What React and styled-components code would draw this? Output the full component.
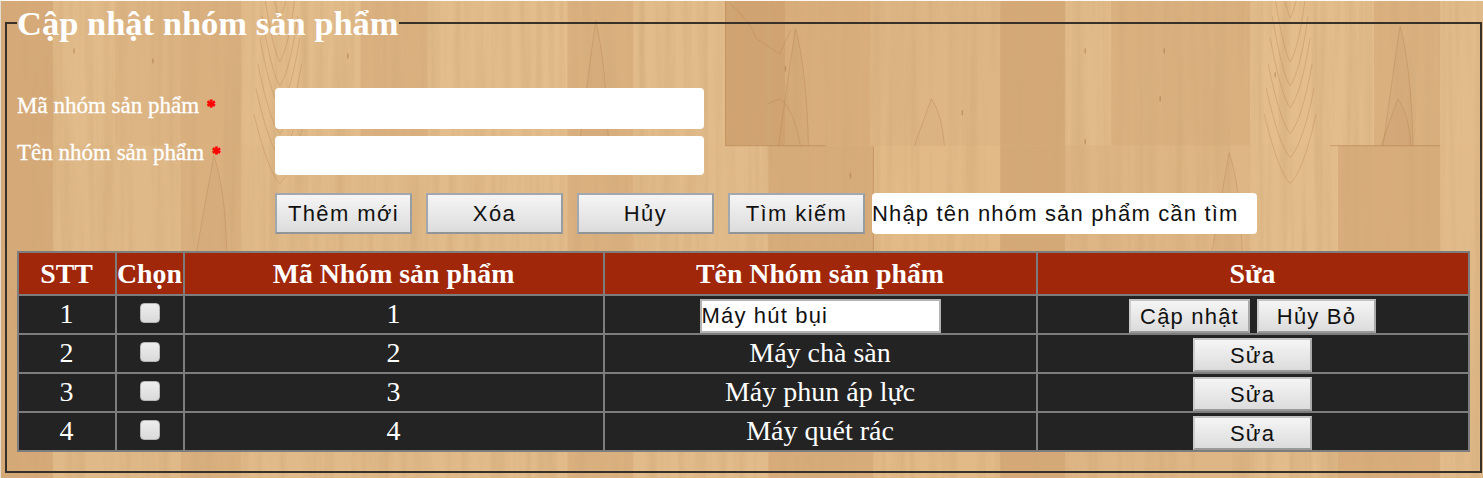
import React from 'react';
import styled, { createGlobalStyle } from 'styled-components';

const GlobalStyle = createGlobalStyle`
  * { box-sizing: border-box; }
  body { margin: 0; background: #ddb583; overflow: hidden; }
  button, input { margin: 0; padding: 0; font: inherit; }
`;

const serif = '"Liberation Serif", "Times New Roman", serif';
const sans = '"Liberation Sans", Arial, sans-serif';

const Page = styled.main`
  position: relative;
  isolation: isolate;
  width: 1483px;
  height: 478px;
  padding: 2px 1px 5px 4px;
  border-top: 1px solid #fdf9f2;
  border-left: 1px solid #e3ddd3;
  font-family: ${serif};
  color: #fff;
  overflow: hidden;
`;

const Backdrop = styled.svg`
  position: absolute;
  inset: 0;
  z-index: -1;
  width: 100%;
  height: 100%;
`;

const Group = styled.fieldset`
  display: block;
  min-width: 0;
  height: 470px;
  margin: 0;
  padding: 0 10px;
  border: 2px solid #37312a;
`;

const Title = styled.legend`
  height: 40px;
  margin: 0;
  padding: 0;
  font-size: 34.5px;
  font-weight: bold;
  line-height: 40px;
  white-space: nowrap;
`;

const Form = styled.form`
  display: flex;
  flex-direction: column;
  padding-top: 45px;
`;

const Field = styled.label`
  display: flex;
  align-items: center;
  height: ${(p) => p.$height}px;
  margin-bottom: ${(p) => p.$gap}px;
`;

const Caption = styled.span`
  width: 258px;
  padding-bottom: 4px;
  font-size: 23px;
  line-height: 26px;
  white-space: nowrap;
  -webkit-text-stroke: 0.3px #fff;
`;

const Required = styled.span`
  margin-left: 2px;
  color: #f00;
  font-size: 18px;
  font-weight: bold;
  -webkit-text-stroke: 0.8px #f00;
`;

const TextBox = styled.input`
  width: ${(p) => p.$width}px;
  height: 100%;
  border: 0;
  border-radius: 4px;
  background: #fff;
  color: #111;
  font-family: ${sans};
  font-size: 22px;
  letter-spacing: 1.17px;
  outline: 0;
`;

const Actions = styled.div`
  display: flex;
  height: 41px;
  margin: 0 0 17px 258px;
`;

const Button = styled.button`
  width: ${(p) => p.$width}px;
  height: ${(p) => p.$height}px;
  margin-right: ${(p) => p.$gap || 0}px;
  padding-top: ${(p) => (p.$flat ? 2 : 0)}px;
  border: 2px solid;
  border-color: ${(p) => (p.$flat ? '#c4c4c4 #aaa #999 #ccc' : '#a2a8ad #989da2 #90959a #a2a8ad')};
  background: linear-gradient(#f5f5f5, #dcdcdc);
  color: #111;
  font-family: ${sans};
  font-size: 22px;
  letter-spacing: ${(p) => (p.$flat ? 1.2 : 1.4)}px;
  line-height: 1;
  white-space: nowrap;
`;

const Table = styled.div`
  display: grid;
  grid-template-columns: 96px 66px 418px 431px 430px;
  grid-template-rows: 41px repeat(4, 37px);
  gap: 2px;
  width: 1453px;
  padding: 2px;
  background: #7d7d7d;
`;

const HeadCell = styled.div`
  display: flex;
  align-items: center;
  justify-content: center;
  padding-right: 1px;
  background: #a02709;
  font-size: 27.8px;
  font-weight: bold;
  line-height: 40px;
  white-space: nowrap;
`;

const Cell = styled.div`
  display: flex;
  align-items: flex-start;
  justify-content: center;
  padding: ${(p) => (p.$controls ? 3 : 0)}px 1px 0 0;
  background: #232323;
  font-size: 28px;
  line-height: 36px;
  white-space: nowrap;
`;

const Check = styled.input`
  appearance: none;
  width: 20px;
  height: 20px;
  margin: 7px 0 0 0;
  border: 1px solid #b5b5b5;
  border-radius: 4px;
  background: linear-gradient(#ededed, #dadada);
`;

const RowInput = styled(TextBox)`
  height: 34px;
  border: 2px solid #b4b4b4;
  border-radius: 0;
`;

/* [left edge, width, colour] of each floor board */
const upperBoards = [
  [0, 52, '#d6aa78'], [52, 62, '#e1bb89'], [114, 66, '#ddb584'], [180, 60, '#dab07f'],
  [240, 120, '#e2bc8b'], [360, 67, '#dbb180'], [427, 140, '#e3bd8c'], [567, 66, '#dab07f'],
  [633, 92, '#e2bc8b'], [725, 60, '#d0a371'], [785, 85, '#d9ae7c'], [870, 130, '#deb685'],
  [1000, 65, '#d5a977'], [1065, 46, '#e1bb8a'], [1111, 139, '#dab07f'], [1250, 124, '#e3bd8c'],
  [1374, 66, '#dab07f'], [1440, 43, '#e2bc8b'],
];
const lowerBoards = [
  [0, 52, '#d6aa78'], [52, 128, '#e0b988'], [180, 60, '#dab07f'], [240, 187, '#e1ba89'],
  [427, 140, '#e2bb8a'], [567, 66, '#dab07f'], [633, 135, '#e2bb8a'], [768, 105, '#d7ac7a'],
  [873, 127, '#e1ba88'], [1000, 65, '#d5a977'], [1065, 185, '#deb685'], [1250, 88, '#e2bc8b'],
  [1338, 102, '#d8ad7b'], [1440, 43, '#e2bb8a'],
];
/* x position of the boards with nested V-shaped growth rings */
const rings = [279, 1290];
/* [x, top, height] of tall pointed growth figures */
const peaks = [[213, 155, 95], [595, 20, 130], [795, 28, 117], [931, 98, 47], [1229, 152, 98], [1400, 25, 120], [1398, 98, 47]];
const specks = [[73, 50], [152, 60], [347, 55], [1085, 50], [1085, 141], [1164, 50], [1160, 98], [1275, 74], [785, 68], [962, 112], [850, 175]];

function Wood() {
  return (
    <Backdrop viewBox="0 0 1483 478" preserveAspectRatio="none" aria-hidden="true">
      <defs>
        <filter id="grain" x="0" y="0" width="100%" height="100%">
          <feTurbulence type="fractalNoise" baseFrequency="0.11 0.0035" numOctaves="3" seed="11" />
          <feColorMatrix values="0 0 0 0 .62  0 0 0 0 .39  0 0 0 0 .18  1.1 0 0 0 -.42" />
        </filter>
      </defs>
      {upperBoards.map(([x, w, c]) => <rect key={x} x={x} y="0" width={w} height="145" fill={c} />)}
      {lowerBoards.map(([x, w, c]) => <rect key={x} x={x} y="145" width={w} height="333" fill={c} />)}
      <rect width="1483" height="478" filter="url(#grain)" />
      <g fill="none" stroke="#b07b48" strokeOpacity=".32">
        {rings.map((x) => (
          <g key={x}>
            {[-8, 36, 60, 82, 108, 132, 158].map((y, i) => (
              <path key={y} d={`M${x - 14 - i * 2} ${y - 45}q${8 + i} 58 ${14 + i * 2} 70q${8 + i} -14 ${14 + i * 2} -70`} />
            ))}
          </g>
        ))}
        {peaks.map(([x, y, h]) => (
          <path
            key={`${x}-${y}`}
            d={`M${x - 17} ${y + h}Q${x - 6} ${y + h / 3} ${x} ${y}Q${x + 11} ${y + h / 3} ${x + 13} ${y + h}`}
            fill="#b98350"
            fillOpacity=".07"
          />
        ))}
        <path d="M730 3Q750 20 756 38Q772 48 779 53L790 30M767 103L780 98Q794 110 800 145" />
        <path d="M725 145h100M873 146v104M725 0v145M1330 145h110" strokeOpacity=".5" />
      </g>
      <g fill="#94623a" fillOpacity=".4">
        {specks.map(([x, y]) => <ellipse key={`${x}-${y}`} cx={x} cy={y} rx="0.8" ry="3" />)}
      </g>
    </Backdrop>
  );
}

const headings = ['STT', 'Chọn', 'Mã Nhóm sản phẩm', 'Tên Nhóm sản phẩm', 'Sửa'];
const rows = [
  { id: 1, name: 'Máy hút bụi', editing: true },
  { id: 2, name: 'Máy chà sàn' },
  { id: 3, name: 'Máy phun áp lực' },
  { id: 4, name: 'Máy quét rác' },
];

export default function App() {
  return (
    <Page>
      <GlobalStyle />
      <Wood />
      <Group>
        <Title>Cập nhật nhóm sản phẩm</Title>
        <Form onSubmit={(e) => e.preventDefault()}>
          <Field $height={41} $gap={7}>
            <Caption>Mã nhóm sản phẩm <Required>*</Required></Caption>
            <TextBox $width={429} />
          </Field>
          <Field $height={39} $gap={18}>
            <Caption>Tên nhóm sản phẩm <Required>*</Required></Caption>
            <TextBox $width={429} />
          </Field>
          <Actions>
            <Button type="button" $width={137} $height={41} $gap={14}>Thêm mới</Button>
            <Button type="button" $width={137} $height={41} $gap={14}>Xóa</Button>
            <Button type="button" $width={137} $height={41} $gap={14}>Hủy</Button>
            <Button type="button" $width={137} $height={41} $gap={7}>Tìm kiếm</Button>
            <TextBox $width={385} defaultValue="Nhập tên nhóm sản phẩm cần tìm" />
          </Actions>
        </Form>
        <Table>
          {headings.map((h) => <HeadCell key={h}>{h}</HeadCell>)}
          {rows.map((r) => (
            <React.Fragment key={r.id}>
              <Cell>{r.id}</Cell>
              <Cell><Check type="checkbox" /></Cell>
              <Cell>{r.id}</Cell>
              <Cell $controls={r.editing}>
                {r.editing ? <RowInput $width={241} defaultValue={r.name} /> : r.name}
              </Cell>
              <Cell $controls>
                {r.editing ? (
                  <>
                    <Button $flat $width={121} $height={34} $gap={7}>Cập nhật</Button>
                    <Button $flat $width={119} $height={34}>Hủy Bỏ</Button>
                  </>
                ) : (
                  <Button $flat $width={119} $height={34}>Sửa</Button>
                )}
              </Cell>
            </React.Fragment>
          ))}
        </Table>
      </Group>
    </Page>
  );
}
